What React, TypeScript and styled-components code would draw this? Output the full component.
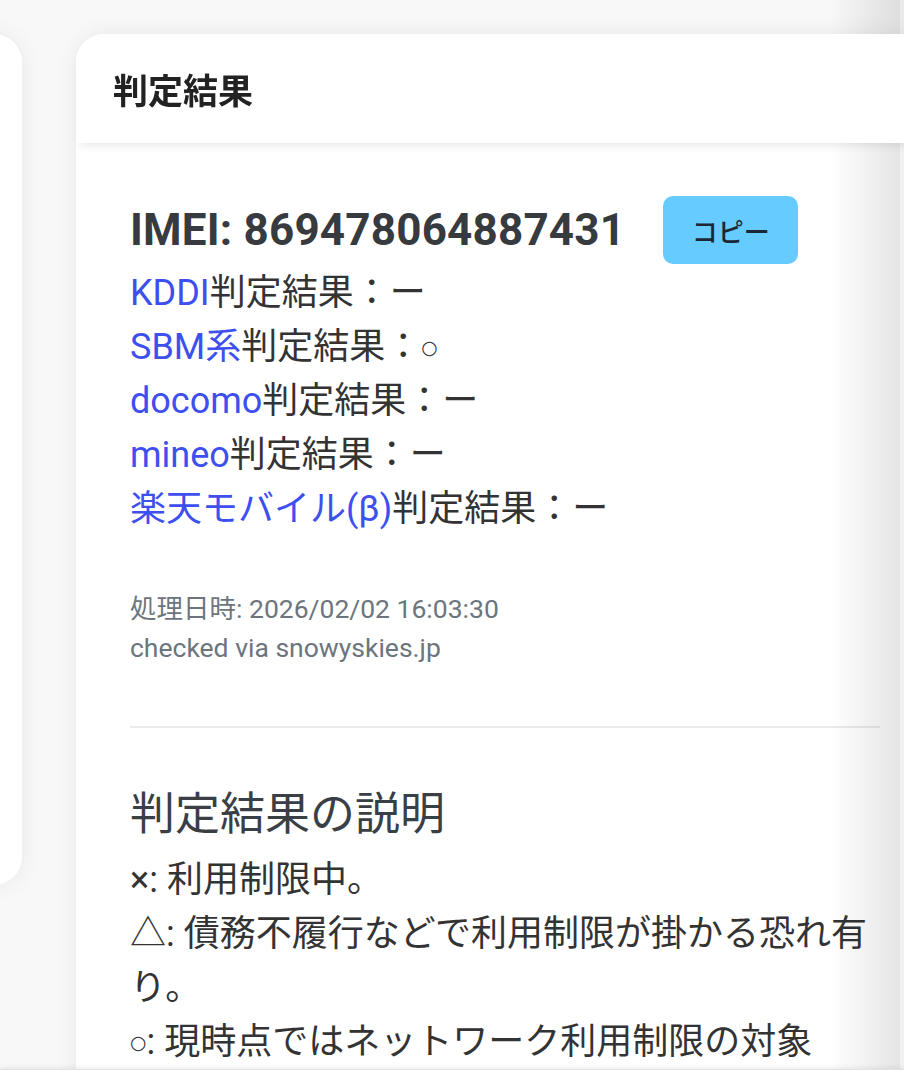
import styled, { createGlobalStyle } from 'styled-components'

const GlobalStyle = createGlobalStyle`
  html, body {
    margin: 0;
    padding: 0;
    background: #f8f8f8;
    overflow: hidden;
  }
  body {
    font-family: Roboto, 'Noto Sans CJK JP', sans-serif;
    color: #333;
  }
`

const Page = styled.div`
  position: relative;
  height: 1080px;
  overflow: hidden;
`

const Track = styled.div`
  display: flex;
  align-items: flex-start;
  gap: 54px;
  padding-top: 34px;
  margin-left: -378px;
`

const SideCard = styled.div`
  flex: 0 0 400px;
  height: 851px;
  background: #fff;
  border-radius: 28px;
  box-shadow: 0 0 22px rgba(0, 0, 0, 0.07);
`

const ResultCard = styled.section`
  flex: 0 0 858px;
  min-height: 1100px;
  background: #fff;
  border-radius: 28px 28px 0 0;
  box-shadow: 0 0 22px rgba(0, 0, 0, 0.07);
`

const CardHeader = styled.header`
  position: relative;
  z-index: 1;
  height: 109px;
  display: flex;
  align-items: center;
  padding: 0 37px;
  background: #fff;
  border-radius: 28px 28px 0 0;
  font-size: 35px;
  font-weight: 700;
  color: #222;
  box-shadow: 0 6px 10px -4px rgba(0, 0, 0, 0.1);
`

const CardBody = styled.div`
  padding: 53px 54px 0;
`

const ImeiRow = styled.div`
  display: flex;
  align-items: center;
  gap: 38px;
  height: 68px;
`

const Imei = styled.h3`
  margin: 0;
  font-size: 44px;
  font-weight: 700;
  line-height: 1.2;
  letter-spacing: 0.2px;
  color: #373a3e;
`

const CopyButton = styled.button`
  width: 135px;
  height: 68px;
  border: none;
  border-radius: 10px;
  background: #66ccff;
  color: #1b2733;
  font-family: inherit;
  font-size: 26px;
  font-weight: 500;
  padding: 0;
`

const Results = styled.div`
  margin-top: 2px;
`

const Line = styled.div`
  font-size: 36px;
  line-height: 54px;
  color: #333;
`

const Carrier = styled.span`
  color: #3d4fef;
`

const Circle = styled.span`
  display: inline-block;
  font-family: 'DejaVu Sans', sans-serif;
  font-size: 19px;
  line-height: 0;
  vertical-align: 0.25em;
`

const Meta = styled.div`
  margin-top: 53px;
  font-size: 26.5px;
  line-height: 39px;
  color: #6c757d;
`

const Divider = styled.hr`
  margin: 59px 0 0;
  border: none;
  height: 2px;
  background: #ebebeb;
`

const Heading = styled.h4`
  margin: 60px 0 11px;
  font-size: 45px;
  font-weight: 400;
  line-height: 54px;
  color: #3a3f45;
`

const EdgeFade = styled.div`
  position: fixed;
  top: 0;
  right: 0;
  width: 74px;
  height: 100%;
  pointer-events: none;
  background: linear-gradient(to right, rgba(0, 0, 0, 0) 0%, rgba(0, 0, 0, 0.1) 94%, rgba(0, 0, 0, 0.05) 95%);
`

const BottomBar = styled.div`
  position: fixed;
  left: 0;
  right: 0;
  bottom: 0;
  height: 10px;
  background: #fff;
  border-top: 1px solid #e2e2e2;
  box-shadow: 0 -2px 4px rgba(0, 0, 0, 0.06);
`

const carriers = [
  { name: 'KDDI', mark: 'ー' },
  { name: 'SBM系', mark: '○' },
  { name: 'docomo', mark: 'ー' },
  { name: 'mineo', mark: 'ー' },
  { name: '楽天モバイル(β)', mark: 'ー' }
]

const Mark = ({ value }: { value: string }) => (value === '○' ? <Circle>○</Circle> : <>{value}</>)

const legend = [
  { mark: '×', text: '利用制限中。' },
  { mark: '△', text: '債務不履行などで利用制限が掛かる恐れ有り。' },
  { mark: '○', text: '現時点ではネットワーク利用制限の対象' }
]

const App = () => {
  return (
    <Page>
      <GlobalStyle />
      <Track>
        <SideCard />
        <ResultCard>
          <CardHeader>判定結果</CardHeader>
          <CardBody>
            <ImeiRow>
              <Imei>IMEI: 869478064887431</Imei>
              <CopyButton>コピー</CopyButton>
            </ImeiRow>
            <Results>
              {carriers.map((c) => (
                <Line key={c.name}>
                  <Carrier>{c.name}</Carrier>判定結果：<Mark value={c.mark} />
                </Line>
              ))}
            </Results>
            <Meta>
              <div>処理日時: 2026/02/02 16:03:30</div>
              <div>checked via snowyskies.jp</div>
            </Meta>
            <Divider />
            <Heading>判定結果の説明</Heading>
            {legend.map((l) => (
              <Line key={l.mark}>
                <Mark value={l.mark} />: {l.text}
              </Line>
            ))}
          </CardBody>
        </ResultCard>
      </Track>
      <EdgeFade />
      <BottomBar />
    </Page>
  )
}

export default App
